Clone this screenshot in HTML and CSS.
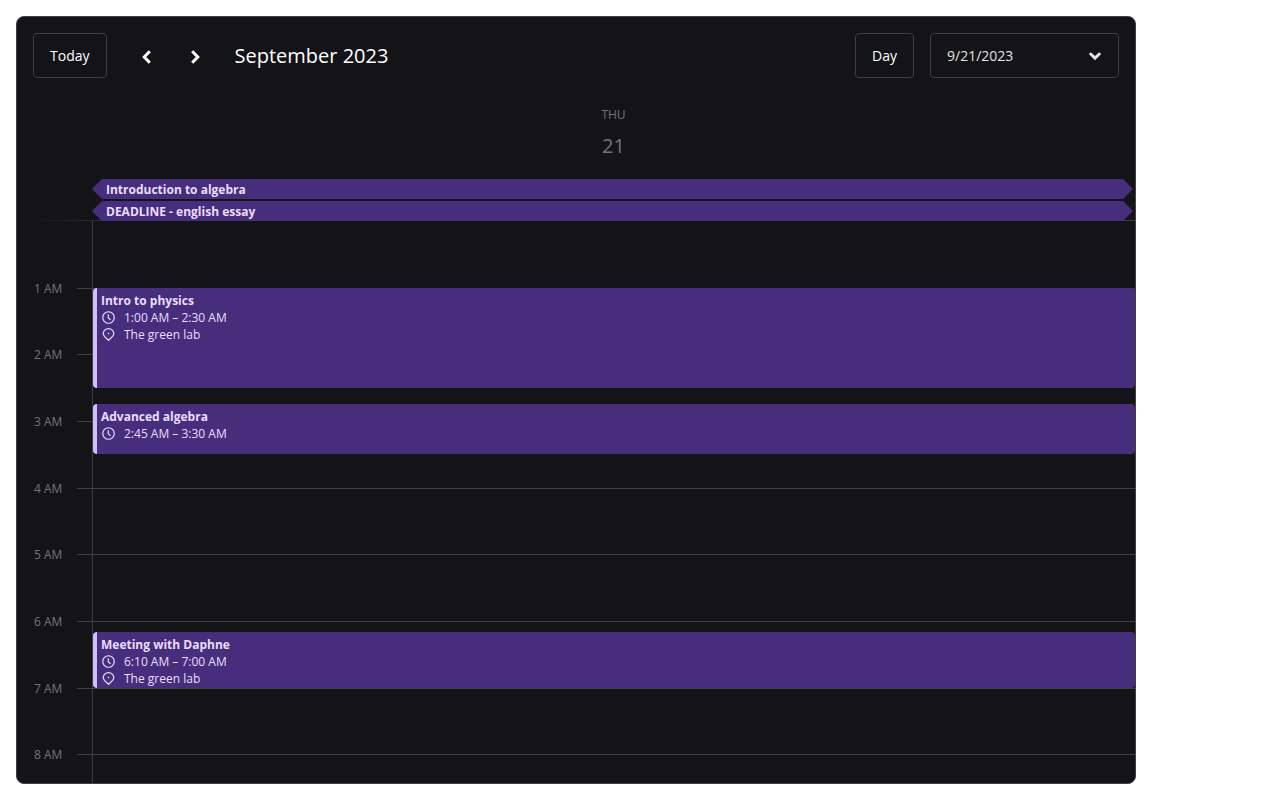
FILE: index.html
```html
<!DOCTYPE html>
<html lang="en">
<head>
<meta charset="utf-8">
<meta name="viewport" content="width=device-width, initial-scale=1">
<title>September 2023</title>
<link rel="stylesheet" href="styles.css">
</head>
<body>
<svg class="sprite" aria-hidden="true">
  <symbol id="clock" viewBox="0 0 14 14">
    <circle cx="7" cy="7" r="6.2"/>
    <path d="M6.8 3.4V7.2L9.2 9.6"/>
  </symbol>
  <symbol id="pin" viewBox="0 0 14 14">
    <path d="M7 13.2C5.2 11.4 1.3 8.9 1.3 6a5.7 5.3 0 0 1 11.4 0C12.7 8.9 8.8 11.4 7 13.2Z"/>
    <path d="M6.4 6.6L7.6 5.4"/>
  </symbol>
</svg>
<main class="calendar">
  <header class="toolbar">
    <button class="button" type="button">Today</button>
    <nav class="arrows">
      <button class="arrow" type="button" aria-label="Previous day"><svg viewBox="0 0 16 16"><path d="M10.8 2.2L5.2 8l5.6 5.8"/></svg></button>
      <button class="arrow" type="button" aria-label="Next day"><svg viewBox="0 0 16 16"><path d="M5.2 2.2L10.8 8l-5.6 5.8"/></svg></button>
    </nav>
    <h1 class="range">September 2023</h1>
    <button class="button view" type="button">Day</button>
    <label class="picker">
      <input class="picker-input" type="text" value="9/21/2023" aria-label="Date">
      <svg class="picker-icon" viewBox="0 0 14 14"><path d="M2.7 5L7 9.1 11.3 5"/></svg>
    </label>
  </header>
  <section class="day-header">
    <div class="day-name">THU</div>
    <div class="day-number">21</div>
    <div class="all-day">Introduction to algebra</div>
    <div class="all-day">DEADLINE - english essay</div>
  </section>
  <section class="timeline">
    <div class="axis"></div>
    <div class="hour" style="grid-row:13">1 AM</div><div class="line" style="grid-row:13"></div>
    <div class="hour" style="grid-row:25">2 AM</div><div class="line" style="grid-row:25"></div>
    <div class="hour" style="grid-row:37">3 AM</div><div class="line" style="grid-row:37"></div>
    <div class="hour" style="grid-row:49">4 AM</div><div class="line" style="grid-row:49"></div>
    <div class="hour" style="grid-row:61">5 AM</div><div class="line" style="grid-row:61"></div>
    <div class="hour" style="grid-row:73">6 AM</div><div class="line" style="grid-row:73"></div>
    <article class="event" style="grid-row:13/31">
      <h2 class="title">Intro to physics</h2>
      <p class="detail"><svg class="icon"><use href="#clock"/></svg>1:00 AM – 2:30 AM</p>
      <p class="detail"><svg class="icon"><use href="#pin"/></svg>The green lab</p>
    </article>
    <article class="event" style="grid-row:34/43">
      <h2 class="title">Advanced algebra</h2>
      <p class="detail"><svg class="icon"><use href="#clock"/></svg>2:45 AM – 3:30 AM</p>
    </article>
    <article class="event" style="grid-row:75/85">
      <h2 class="title">Meeting with Daphne</h2>
      <p class="detail"><svg class="icon"><use href="#clock"/></svg>6:10 AM – 7:00 AM</p>
      <p class="detail"><svg class="icon"><use href="#pin"/></svg>The green lab</p>
    </article>
    <div class="hour" style="grid-row:85">7 AM</div><div class="line" style="grid-row:85"></div>
    <div class="hour" style="grid-row:97">8 AM</div><div class="line" style="grid-row:97"></div>
  </section>
</main>
</body>
</html>
```
FILE: styles.css
```css
* { box-sizing: border-box; }

body {
  margin: 0;
  padding: 16px;
  background: #fff;
  font-family: "Open Sans", "Noto Sans", sans-serif;
  font-size: 12px;
}

.sprite { display: none; }

.calendar {
  display: flex;
  flex-direction: column;
  max-width: 1120px;
  height: calc(100vh - 32px);
  overflow: hidden;
  border: 1px solid #3f3f3f;
  border-radius: 8px;
  background: #141318;
}

.toolbar {
  display: flex;
  align-items: center;
  padding: 16px;
}

.button,
.picker {
  border: 1px solid #3f3f3f;
  border-radius: 4px;
  background: transparent;
  color: #fff;
}

.button {
  padding: 12px 16px;
  font: 500 14px/19px "Open Sans", "Noto Sans", sans-serif;
}

.view { margin-left: auto; }

.arrows {
  display: flex;
  gap: 16px;
  margin: 2px 24px 0 24px;
}

.arrow {
  display: flex;
  padding: 8px;
  border: 0;
  background: transparent;
}

.arrow svg {
  width: 16px;
  height: 16px;
  fill: none;
  stroke: #fff;
  stroke-width: 3;
}

.range {
  margin: 0;
  color: #fff;
  font-size: 20px;
  font-weight: 400;
  line-height: 27px;
}

.picker {
  display: flex;
  align-items: center;
  width: 189px;
  margin-left: 16px;
  padding: 12px 16px;
}

.picker-input {
  flex: 1;
  min-width: 0;
  padding: 0;
  border: 0;
  background: transparent;
  color: #e6e1e5;
  font: 14px/19px "Open Sans", "Noto Sans", sans-serif;
  height: 19px;
}

.picker-icon {
  width: 14px;
  height: 14px;
  fill: none;
  stroke: #e6e1e5;
  stroke-width: 3;
  stroke-linecap: round;
}

.day-header {
  display: grid;
  gap: 2px;
  padding: 12px 2px 0 75px;
  background:
    linear-gradient(to right, transparent 16px, #3f3f3f 120px) bottom / 100% 1px no-repeat;
}

.day-name,
.day-number {
  padding-left: 2px;
  color: #75737a;
  text-align: center;
}

.day-name { line-height: 18px; }

.day-number {
  padding-bottom: 19px;
  padding-top: 8px;
  font-size: 20px;
  line-height: 24px;
}

.all-day {
  padding: 1px 0 0 14px;
  background: #462e7d;
  clip-path: polygon(0 50%, 10px 0, calc(100% - 10px) 0, 100% 50%, calc(100% - 10px) 100%, 10px 100%);
  color: #eaddff;
  font-weight: 700;
  line-height: 19px;
}

.timeline {
  display: grid;
  flex: none;
  grid-template-columns: 60px 15px 1fr;
  grid-template-rows: repeat(108, minmax(0, 1fr));
  height: 600px;
}

.axis {
  grid-area: 1 / 3 / -1 / 4;
  border-left: 1px solid #3f3f3f;
}

.hour {
  grid-column: 1;
  height: 16px;
  margin-top: -7px;
  padding-left: 17px;
  color: #75737a;
  line-height: 16px;
}

.line {
  grid-column: 2 / 4;
  border-top: 1px solid #3f3f3f;
}

.event {
  grid-column: 3;
  margin-left: 1px;
  padding: 4px;
  overflow: hidden;
  border-left: 4px solid #d0bcff;
  border-radius: 4px;
  background: #462e7d;
  color: #eaddff;
  line-height: 17px;
}

.title {
  margin: 0;
  font-size: 12px;
  font-weight: 700;
}

.detail {
  display: flex;
  align-items: center;
  gap: 9px;
  margin: 0;
  padding-left: 1px;
}

.icon {
  width: 13px;
  height: 13px;
  fill: none;
  stroke: #eaddff;
  stroke-width: 1.3;
}
```
